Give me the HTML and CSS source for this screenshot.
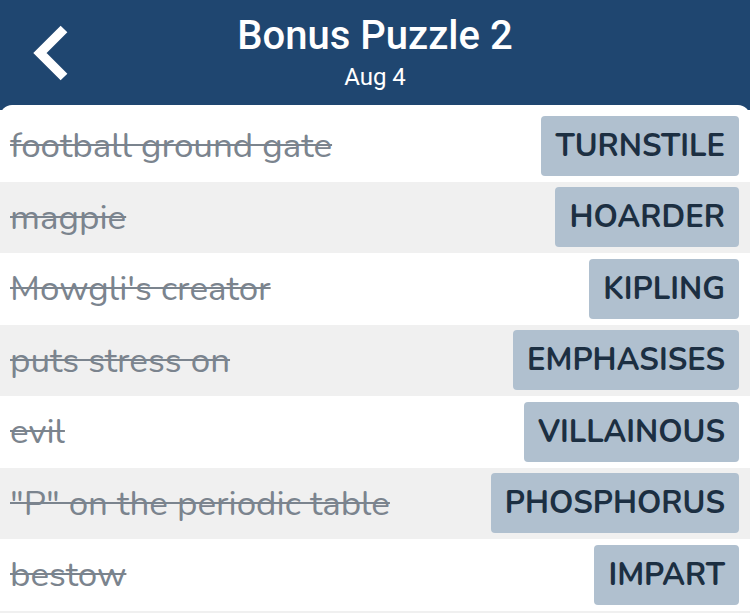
FILE: index.html
```html
<!DOCTYPE html>
<html>
<head>
<meta charset="utf-8">
<link rel="stylesheet" href="styles.css">
</head>
<body>
<div class="app">
  <header class="topbar">
    <div class="back">
      <svg width="44" height="60" viewBox="0 0 44 60"><path d="M36 6 L12 30 L36 54" fill="none" stroke="#fff" stroke-width="9.5" stroke-linecap="butt" stroke-linejoin="miter"/></svg>
    </div>
    <div class="titles">
      <div class="title">Bonus Puzzle 2</div>
      <div class="subtitle">Aug 4</div>
    </div>
  </header>
  <main class="card">
    <div class="row"><span class="clue">football ground gate</span><span class="chip">TURNSTILE</span></div>
    <div class="row alt"><span class="clue">magpie</span><span class="chip">HOARDER</span></div>
    <div class="row"><span class="clue">Mowgli's creator</span><span class="chip">KIPLING</span></div>
    <div class="row alt"><span class="clue">puts stress on</span><span class="chip">EMPHASISES</span></div>
    <div class="row"><span class="clue">evil</span><span class="chip">VILLAINOUS</span></div>
    <div class="row alt"><span class="clue">"P" on the periodic table</span><span class="chip">PHOSPHORUS</span></div>
    <div class="row"><span class="clue">bestow</span><span class="chip">IMPART</span></div>
    <div class="row alt tail"></div>
  </main>
</div>
</body>
</html>
```
FILE: styles.css
```css
html, body {
  margin: 0;
  padding: 0;
}
body {
  width: 750px;
  height: 613px;
  overflow: hidden;
  background: #1f4670;
  font-family: "Nunito", "Lato", "Noto Sans", sans-serif;
}
.app {
  display: flex;
  flex-direction: column;
}
.topbar {
  height: 105px;
  background: #1f4670;
  position: relative;
  display: flex;
  justify-content: center;
}
.back {
  position: absolute;
  left: 28px;
  top: 23px;
}
.titles {
  display: flex;
  flex-direction: column;
  align-items: center;
  color: #fff;
  font-family: "Roboto", "Liberation Sans", sans-serif;
}
.title {
  font-size: 40px;
  font-weight: 500;
  line-height: 46px;
  margin-top: 13px;
}
.subtitle {
  font-size: 24px;
  line-height: 28px;
  margin-top: 4px;
}
.card {
  background: #fff;
  border-radius: 12px 12px 0 0;
  padding-top: 5px;
  display: flex;
  flex-direction: column;
}
.row {
  height: 71.5px;
  display: flex;
  align-items: center;
  justify-content: space-between;
  padding: 0 11px 0 10px;
  background: #fff;
}
.row.alt {
  background: #f0f0f0;
}
.row.tail {
  height: 2px;
}
.clue {
  font-size: 35px;
  color: #7b848e;
  text-decoration: line-through;
  text-decoration-color: #7b848e;
  text-decoration-thickness: 2px;
}
.chip {
  height: 60px;
  box-sizing: border-box;
  padding: 0 14px;
  display: flex;
  align-items: center;
  background: #b0c0cf;
  color: #1c2f42;
  font-size: 31px;
  font-weight: 700;
  border-radius: 4px;
}
```
